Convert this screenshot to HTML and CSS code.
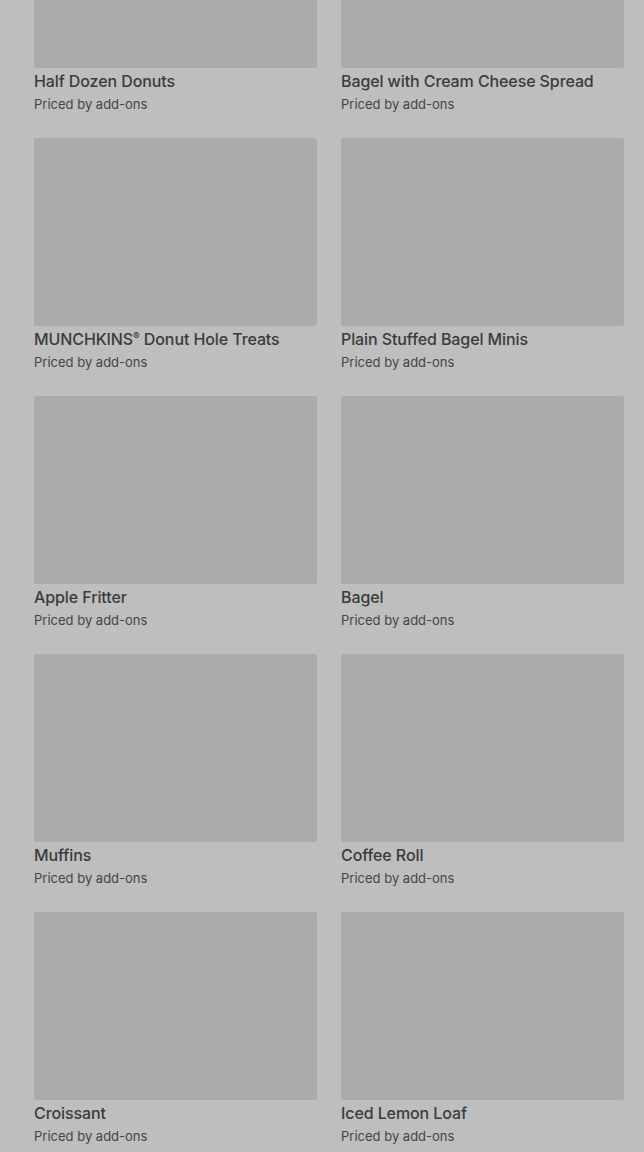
FILE: index.html
```html
<!DOCTYPE html>
<html>
<head>
    <meta name="viewport" content="width=device-width, initial-scale=1">
    <link rel="stylesheet" href="styles.css">
</head>
<body>
    <div class="grid">
        <div class="item">
            <div class="thumb"></div>
            <h3>Half Dozen Donuts</h3>
            <p>Priced by add-ons</p>
        </div>
        <div class="item">
            <div class="thumb"></div>
            <h3>Bagel with Cream Cheese Spread</h3>
            <p>Priced by add-ons</p>
        </div>
        <div class="item">
            <div class="thumb"></div>
            <h3>MUNCHKINS<sup>&reg;</sup> Donut Hole Treats</h3>
            <p>Priced by add-ons</p>
        </div>
        <div class="item">
            <div class="thumb"></div>
            <h3>Plain Stuffed Bagel Minis</h3>
            <p>Priced by add-ons</p>
        </div>
        <div class="item">
            <div class="thumb"></div>
            <h3>Apple Fritter</h3>
            <p>Priced by add-ons</p>
        </div>
        <div class="item">
            <div class="thumb"></div>
            <h3>Bagel</h3>
            <p>Priced by add-ons</p>
        </div>
        <div class="item">
            <div class="thumb"></div>
            <h3>Muffins</h3>
            <p>Priced by add-ons</p>
        </div>
        <div class="item">
            <div class="thumb"></div>
            <h3>Coffee Roll</h3>
            <p>Priced by add-ons</p>
        </div>
        <div class="item">
            <div class="thumb"></div>
            <h3>Croissant</h3>
            <p>Priced by add-ons</p>
        </div>
        <div class="item">
            <div class="thumb"></div>
            <h3>Iced Lemon Loaf</h3>
            <p>Priced by add-ons</p>
        </div>
    </div>
</body>
</html>
```

FILE: styles.css
```css
body {
    margin: 0;
    font-family: Inter, "Noto Sans", sans-serif;
    background-color: #bebebe;
    overflow: hidden;
}

.grid {
    display: grid;
    grid-template-columns: 283px 283px;
    column-gap: 24px;
    row-gap: 24px;
    padding: 0 20px 0 34px;
    margin-top: -120px;
}

.thumb {
    height: 188px;
    background-color: #ababab;
    border-radius: 2px;
}

.item h3 {
    margin: 1px 0 0;
    font-size: 16px;
    line-height: 24px;
    font-weight: 500;
    letter-spacing: -0.1px;
    color: #3b3b3b;
}

.item h3 sup {
    font-size: 10px;
    line-height: 0;
    vertical-align: 5px;
}

.item p {
    margin: 1px 0 0;
    font-size: 13px;
    line-height: 20px;
    color: #454545;
}
```
